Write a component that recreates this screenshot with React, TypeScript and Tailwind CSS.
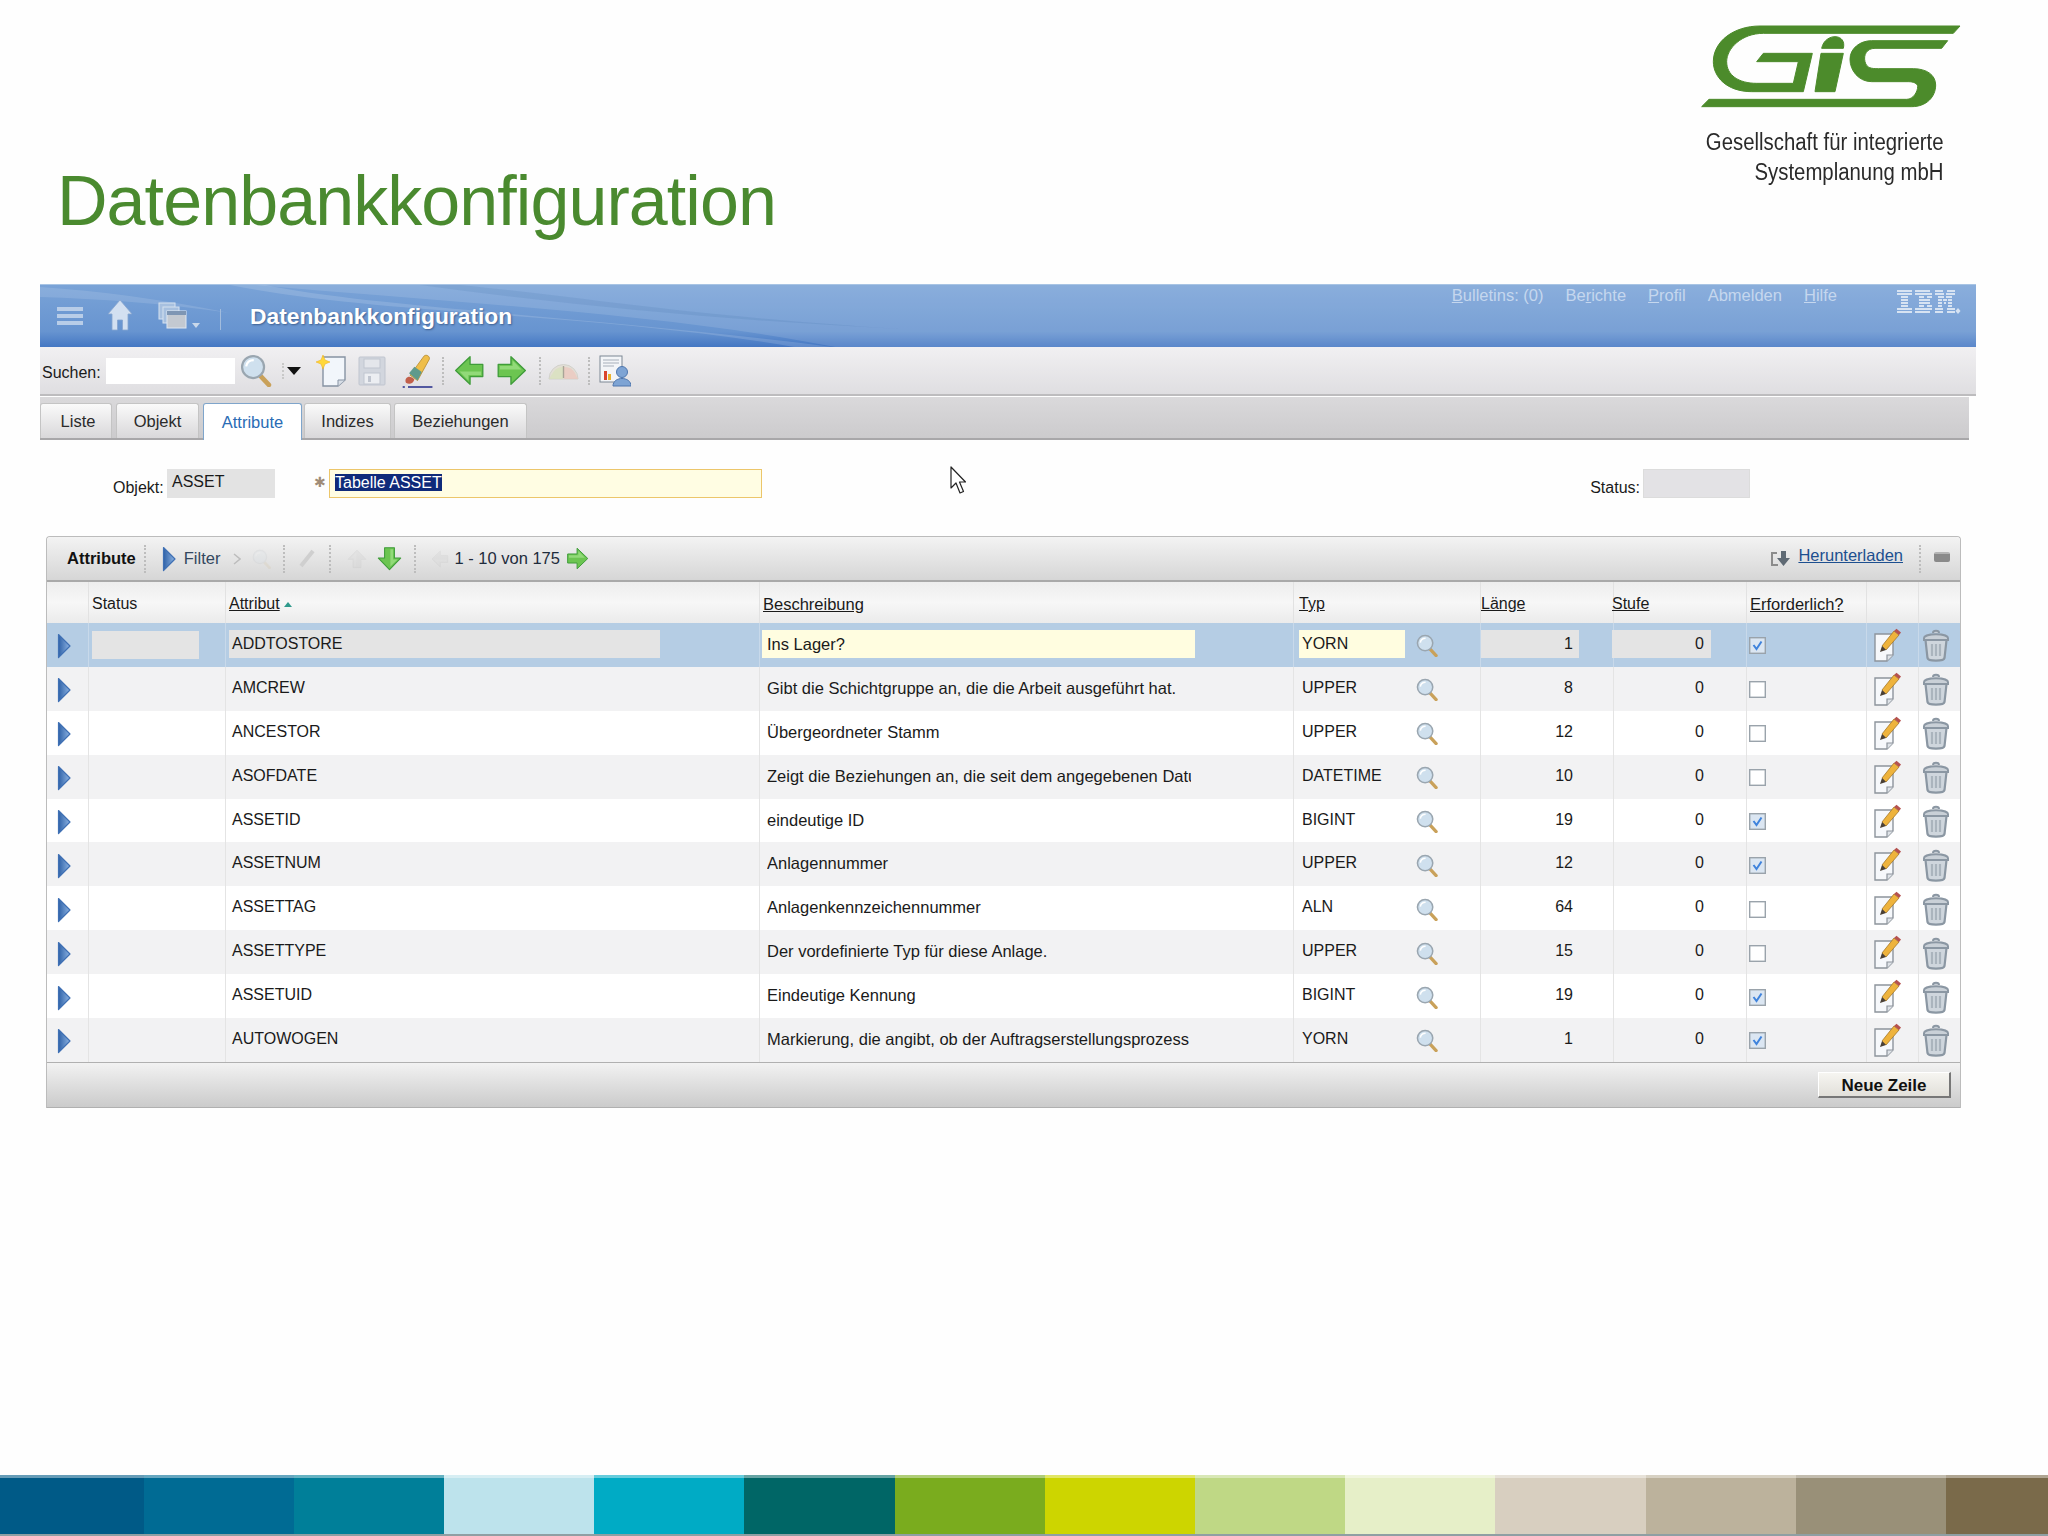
import React from "react";

const cols = "grid grid-cols-[42px_137px_534px_534px_187px_133px_133px_120px_52px_43px]";

const rows = [
  { attr: "ADDTOSTORE", desc: "Ins Lager?", typ: "YORN", len: "1", req: true },
  { attr: "AMCREW", desc: "Gibt die Schichtgruppe an, die die Arbeit ausgeführt hat.", typ: "UPPER", len: "8", req: false },
  { attr: "ANCESTOR", desc: "Übergeordneter Stamm", typ: "UPPER", len: "12", req: false },
  { attr: "ASOFDATE", desc: "Zeigt die Beziehungen an, die seit dem angegebenen Datum", typ: "DATETIME", len: "10", req: false },
  { attr: "ASSETID", desc: "eindeutige ID", typ: "BIGINT", len: "19", req: true },
  { attr: "ASSETNUM", desc: "Anlagennummer", typ: "UPPER", len: "12", req: true },
  { attr: "ASSETTAG", desc: "Anlagenkennzeichennummer", typ: "ALN", len: "64", req: false },
  { attr: "ASSETTYPE", desc: "Der vordefinierte Typ für diese Anlage.", typ: "UPPER", len: "15", req: false },
  { attr: "ASSETUID", desc: "Eindeutige Kennung", typ: "BIGINT", len: "19", req: true },
  { attr: "AUTOWOGEN", desc: "Markierung, die angibt, ob der Auftragserstellungsprozess", typ: "YORN", len: "1", req: true },
];

const tabs = [
  { label: "Liste", cls: "w-[72px] pl-1" },
  { label: "Objekt", cls: "w-[83px] ml-1" },
  { label: "Attribute", cls: "w-[99px] ml-1", active: true },
  { label: "Indizes", cls: "w-[87px] ml-0.5" },
  { label: "Beziehungen", cls: "w-[133px] ml-[3px]" },
];

const strip = [
  "w-[144px] bg-[#005a87]",
  "w-[150px] bg-[#006b94]",
  "w-[150px] bg-[#007f99]",
  "w-[150px] bg-[#bde3ec]",
  "w-[150px] bg-[#00abc5]",
  "w-[151px] bg-[#006666]",
  "w-[150px] bg-[#7aac1e]",
  "w-[150px] bg-[#cdd500]",
  "w-[150px] bg-[#bfd885]",
  "w-[150px] bg-[#e6efc8]",
  "w-[151px] bg-[#d8cfc0]",
  "w-[150px] bg-[#bcb29c]",
  "w-[150px] bg-[#999078]",
  "w-[102px] bg-[#7a6a4a]",
];

// IBM-Logo: Streifen je Zeile als [x, Breite]
const ibmStripes: number[][][] = [
  [[0, 15], [18, 15], [38, 8], [50, 8]],
  [[0, 15], [18, 17], [38, 9], [49, 9]],
  [[4, 7], [22, 5], [30, 5], [41, 6], [49, 6]],
  [[4, 7], [22, 11], [41, 4], [46, 4], [51, 4]],
  [[4, 7], [22, 11], [41, 4], [47, 2], [51, 4]],
  [[4, 7], [22, 5], [30, 5], [41, 4], [51, 4]],
  [[0, 15], [18, 17], [38, 8], [50, 8]],
  [[0, 15], [18, 15], [38, 8], [50, 8]],
];

function GisLogo() {
  return (
    <svg width="280" height="95" viewBox="0 0 840 285" fill="#4c8b2b" stroke="#4c8b2b" strokeWidth="3">
      <path d="M795,18 L775,40 L205,40 C140,40 95,85 95,125 C95,165 130,190 185,190 L295,190 L310,125 L185,125 L205,100 L352,100 L325,215 L170,215 C95,215 55,170 55,125 C55,65 115,18 195,18 Z" />
      <path d="M380,85 C385,60 405,50 420,50 C440,50 450,65 445,85 Z" />
      <path d="M378,100 L445,100 L420,215 L360,215 Z" />
      <path d="M758,62 L740,85 L540,85 C515,85 505,105 510,125 C515,145 530,146 550,146 L655,146 C695,146 722,165 722,195 C722,230 695,260 650,260 L20,260 L42,238 L635,238 C655,238 668,215 668,200 C668,190 655,185 640,185 L530,185 C490,185 465,150 465,118 C465,85 495,62 530,62 Z" />
    </svg>
  );
}

function IbmLogo() {
  return (
    <svg className="ml-[60px] mr-[15px] mt-1" width="64" height="26" viewBox="0 0 64 26" fill="#d7e3f2">
      {ibmStripes.map((line, r) =>
        line.map(([x, w]) => <rect key={`${r}-${x}`} x={x} y={r * 3 + 1} width={w} height="2" />),
      )}
      <path d="M61 19 L63.5 22 L61 25 L58.5 22 Z" />
    </svg>
  );
}

function Lens({ size = 24, className = "" }: { size?: number; className?: string }) {
  return (
    <svg width={size} height={size} viewBox="0 0 24 24" className={className}>
      <path d="M14.5 15.5 L21 22.5" stroke="#c9a15a" strokeWidth="3.4" strokeLinecap="round" />
      <circle cx="9.5" cy="9.5" r="8" fill="#cfe0ee" stroke="#9aa6b0" strokeWidth="1.6" />
      <path d="M4.5 9 C5 6 7 4.5 10 4.5" stroke="#ffffff" strokeWidth="1.6" fill="none" />
    </svg>
  );
}

function GreenArrow({ dir, size = 28, className = "" }: { dir: "left" | "right" | "down"; size?: number; className?: string }) {
  const rot = dir === "left" ? 180 : dir === "down" ? 90 : 0;
  return (
    <svg width={size} height={size} viewBox="0 0 28 28" className={className}>
      <g transform={`rotate(${rot} 14 14)`}>
        <path d="M2 8.5 H13.5 V1.5 L26.5 14 L13.5 26.5 V19.5 H2 Z" fill="#6cc551" stroke="#3f9c3a" strokeWidth="1.2" strokeLinejoin="round" />
        <path d="M3.5 10 H15 V5 L23 13 H3.5 Z" fill="#a3e28a" opacity="0.7" />
      </g>
    </svg>
  );
}

function RowArrow({ className = "" }: { className?: string }) {
  return (
    <svg width="14" height="26" viewBox="0 0 14 26" className={className}>
      <defs>
        <linearGradient id="rowArrow" x1="0" y1="0" x2="1" y2="0">
          <stop offset="0" stopColor="#2f62a8" />
          <stop offset="1" stopColor="#8db3e2" />
        </linearGradient>
      </defs>
      <path d="M1.5 1.5 L13 13 L1.5 24.5 Z" fill="url(#rowArrow)" stroke="#3f70b4" strokeWidth="1.2" strokeLinejoin="round" />
    </svg>
  );
}

function EditIcon() {
  return (
    <svg width="28" height="34" viewBox="0 0 28 34">
      <path d="M1 6 H19 V27 L13 33 H1 Z" fill="#f6f8fb" stroke="#8d949c" strokeWidth="1.4" />
      <path d="M13 33 V27 H19" fill="#dfe3e8" stroke="#8d949c" strokeWidth="1.2" />
      <path d="M8 18 L20 3 L25 7 L12 22 Z" fill="#eeb33c" stroke="#a5772a" strokeWidth="0.8" />
      <path d="M20 3 L22.5 0.8 L27 4.5 L25 7 Z" fill="#b5524f" />
      <path d="M8 18 L12 22 L6 24 Z" fill="#4a4036" />
    </svg>
  );
}

function TrashIcon() {
  return (
    <svg width="28" height="33" viewBox="0 0 28 33">
      <path d="M11 4 C11 1 17 1 17 4" fill="#c9d0d7" stroke="#8b97a3" strokeWidth="2" />
      <path d="M2 9 C2 4 26 4 26 9 V11 H2 Z" fill="#c9d0d7" stroke="#8b97a3" strokeWidth="2" />
      <path d="M3.5 11 H24.5 L22.5 29 C22 32.5 6 32.5 5.5 29 Z" fill="#cfd6dd" stroke="#8b97a3" strokeWidth="2.2" />
      <path d="M10 15 V27 M14 15 V27 M18 15 V27" stroke="#aab4bd" strokeWidth="2.2" />
    </svg>
  );
}

function Checkbox({ checked }: { checked: boolean }) {
  return (
    <svg width="17" height="17" viewBox="0 0 17 17">
      <rect x="0.7" y="0.7" width="15.6" height="15.6" fill={checked ? "#dbe6f2" : "#ffffff"} stroke="#9aa3ab" strokeWidth="1.4" />
      {checked && <path d="M4.5 8 L7.5 12 L12.5 4.5" fill="none" stroke="#3f83dc" strokeWidth="2" />}
    </svg>
  );
}

function Sep({ className = "" }: { className?: string }) {
  return <div className={`h-7 border-l-2 border-dotted border-[#bdbdbd] ${className}`} />;
}

function TopBar() {
  return (
    <div className="relative h-[63px] bg-linear-to-b from-[#7aa3d7] via-[#6794d0] via-75% to-[#4477c3] border-t border-[#a8c4e4] overflow-hidden">
      {/* Schlieren im Hintergrund */}
      <svg className="absolute inset-0" width="1936" height="63" viewBox="0 0 1936 63">
        <path d="M0 2 C60 6 120 14 190 28 C120 18 60 14 0 12 Z" fill="#ffffff" opacity="0.12" />
        <path d="M215 0 L1936 0 L1936 63 L800 63 C640 30 420 18 215 0 Z" fill="#ffffff" opacity="0.12" />
        <path d="M190 0 L225 0 C330 22 560 32 800 63 L760 63 C560 28 340 30 190 0 Z" fill="#ffffff" opacity="0.14" />
        <path d="M420 0 C560 14 640 30 860 44 C700 36 540 22 380 0 Z" fill="#2f5f9f" opacity="0.12" />
      </svg>
      <div className="relative flex items-start h-full">
        <div className="flex flex-col gap-[3px] ml-[17px] mt-[22px] w-[26px]">
          <div className="h-1 bg-[#b8cde8]" />
          <div className="h-1 bg-[#b8cde8]" />
          <div className="h-1 bg-[#b8cde8]" />
        </div>
        <svg className="ml-6 mt-[14px]" width="26" height="32" viewBox="0 0 26 32">
          <path d="M13 1 L25 15 H21 V31 H15.5 V21 H10.5 V31 H5 V15 H1 Z" fill="#d3e0f1" stroke="#86a5cf" strokeWidth="0.8" />
        </svg>
        <svg className="ml-[25px] mt-[17px]" width="29" height="27" viewBox="0 0 29 27">
          <rect x="1" y="1" width="16" height="16" fill="#a7c0df" stroke="#d5e1f0" />
          <rect x="5" y="5" width="16" height="16" fill="#a7c0df" stroke="#d5e1f0" />
          <rect x="9" y="9" width="19" height="17" fill="#c3c9d1" stroke="#dfe7f1" />
          <rect x="9" y="9" width="19" height="4" fill="#7e96b4" />
        </svg>
        <svg className="ml-[5px] mt-[38px]" width="8" height="5" viewBox="0 0 8 5">
          <path d="M0 0 H8 L4 5 Z" fill="#c9d8ea" />
        </svg>
        <div className="ml-5 mt-6 h-[21px] border-l border-[#a2bcdd]" />
        <div className="ml-[29px] mt-[17px] text-[22.8px] leading-7 font-bold text-white [text-shadow:1px_1px_2px_#3d5f90]">
          Datenbankkonfiguration
        </div>
        <div className="ml-auto flex text-[16.5px] leading-5 text-[#c5d7ee]">
          <span><u>B</u>ulletins: (0)</span>
          <span className="ml-[22px]">Be<u>r</u>ichte</span>
          <span className="ml-[22px]"><u>P</u>rofil</span>
          <span className="ml-[22px]">Abmelden</span>
          <span className="ml-[22px]"><u>H</u>ilfe</span>
        </div>
        <IbmLogo />
      </div>
    </div>
  );
}

function SearchBar() {
  return (
    <div className="h-[49px] flex items-center bg-linear-to-b from-[#f1f0f2] to-[#dfdee1] border-b-2 border-[#bdbcbe] text-[16px] text-[#1a1a1a]">
      <span className="ml-0.5 mt-1">Suchen:</span>
      <div className="ml-[5px] h-[26px] w-[129px] bg-white" />
      <Lens size={33} className="ml-[5px]" />
      <Sep className="ml-[9px] !h-4 !border-[#c8c8c8]" />
      <svg className="ml-[3px]" width="14" height="8" viewBox="0 0 14 8">
        <path d="M0 0 H14 L7 8 Z" fill="#111" />
      </svg>
      <svg className="ml-[15px]" width="31" height="33" viewBox="0 0 31 33">
        <path d="M7 3 H29 V26 L22 32 H7 Z" fill="#f2f6fb" stroke="#8793a3" strokeWidth="1.4" />
        <path d="M22 32 V26 H29" fill="#d8dee6" stroke="#8793a3" />
        <path d="M7 1 L9 6 L14 8 L9 10 L7 15 L5 10 L0 8 L5 6 Z" fill="#ffd83a" stroke="#f0b323" strokeWidth="0.6" />
      </svg>
      <svg className="ml-[11px]" width="28" height="30" viewBox="0 0 28 30">
        <rect x="1" y="1" width="26" height="28" rx="1" fill="#d2d6de" stroke="#c0c5cf" />
        <rect x="6" y="3" width="16" height="9" fill="#e4e6eb" stroke="#c0c5cf" />
        <rect x="6" y="17" width="16" height="11" fill="#eceef2" stroke="#c0c5cf" />
        <rect x="10" y="20" width="3" height="6" fill="#c0c5cf" />
      </svg>
      <svg className="ml-[14px]" width="33" height="34" viewBox="0 0 30 32">
        <path d="M9 20 L22 2 C24 0 28 2 27 5 L16 25 Z" fill="#efbe4a" stroke="#b88c30" strokeWidth="0.8" />
        <path d="M8 18 L13 12 L20 17 L16 25 Z" fill="#5f9a8c" />
        <path d="M5 27 C3 22 9 19 13 24 C12 28 8 29 5 27 Z" fill="#c25f4a" />
        <path d="M2 31 H4 M7 31 H30" stroke="#5258a0" strokeWidth="2" />
      </svg>
      <Sep className="ml-[9px]" />
      <GreenArrow dir="left" size={31} className="ml-[10px]" />
      <GreenArrow dir="right" size={31} className="ml-[11px]" />
      <Sep className="ml-3" />
      <svg className="ml-[7px]" width="31" height="18" viewBox="0 0 31 18">
        <path d="M1 17 A14.5 14.5 0 0 1 30 17 Z" fill="#e3dfd6" stroke="#d2d2cc" />
        <path d="M6 9 A12 12 0 0 1 15 5 V17 H1 Z" fill="#d7e1bb" opacity="0.7" />
        <path d="M16 5 A12 12 0 0 1 27 11 L30 17 H16 Z" fill="#ecc5bc" opacity="0.7" />
        <path d="M15.5 4 V16" stroke="#a9a498" strokeWidth="1.4" />
      </svg>
      <Sep className="ml-[9px]" />
      <svg className="ml-[9px]" width="32" height="32" viewBox="0 0 32 32">
        <rect x="1" y="1" width="22" height="26" fill="#f3f5f8" stroke="#7d8794" />
        <path d="M4 5 H20 M4 8 H20 M4 11 H15" stroke="#a8b0ba" strokeWidth="1.2" />
        <rect x="5" y="16" width="3" height="9" fill="#d9442e" />
        <rect x="9" y="19" width="3" height="6" fill="#e9b32e" />
        <circle cx="23" cy="17" r="5.5" fill="#7ea4d4" stroke="#4f77ae" />
        <path d="M14 31 C14 21 32 21 32 31 Z" fill="#7ea4d4" stroke="#4f77ae" />
      </svg>
    </div>
  );
}

function TabBar() {
  return (
    <div className="mt-px w-[1929px] h-[43px] pt-[7px] flex items-end bg-linear-to-b from-[#dad9db] to-[#cccbcd] border-b-2 border-[#a8a7a9] text-[16.5px] text-[#2b2b2b]">
      {tabs.map((t) =>
        t.active ? (
          <div
            key={t.label}
            className={`${t.cls} h-[37px] -mb-0.5 flex items-center justify-center rounded-t-[3px] bg-white border border-b-0 border-[#7fa5cb] text-[#2a6cb5]`}
          >
            {t.label}
          </div>
        ) : (
          <div
            key={t.label}
            className={`${t.cls} h-[35px] flex items-center justify-center rounded-t-[3px] bg-linear-to-b from-[#fafafa] to-[#d9d8da] border border-b-0 border-[#c4c4c4]`}
          >
            {t.label}
          </div>
        ),
      )}
    </div>
  );
}

function FormRow() {
  return (
    <div className="relative h-[96px] pt-[29px] flex items-start text-[16px] text-[#1a1a1a]">
      <span className="ml-[73px] w-[54px] mt-[9px] leading-5">Objekt:</span>
      <div className="h-[29px] w-[108px] pl-[5px] pt-[3px] leading-5 bg-[#e3e3e3]">ASSET</div>
      <span className="ml-10 mt-[8px] w-2.5 h-2.5 flex items-center justify-center text-[#a08c78] text-[14px] leading-none">✱</span>
      <div className="ml-1 h-[29px] w-[433px] pl-[5px] pt-[3px] leading-5 bg-[#fffde3] border border-[#ecc66a]">
        <span className="bg-[#0f2a7a] text-white">Tabelle ASSET</span>
      </div>
      <svg className="absolute left-[910px] top-[26px]" width="16" height="28" viewBox="0 0 16 28">
        <path d="M1 1 V22 L6 17 L10 27 L13.5 25.5 L9.5 16 H15.5 Z" fill="#fff" stroke="#222" strokeWidth="1.2" strokeLinejoin="round" />
      </svg>
      <span className="ml-auto mt-[9px] leading-5">Status:</span>
      <div className="ml-[3px] mr-[226px] h-[29px] w-[107px] bg-[#e3e2e5] border border-[#dcdcdc]" />
    </div>
  );
}

function TableToolbar() {
  return (
    <div className="h-[45px] flex items-center rounded-t-[4px] bg-linear-to-b from-[#f3f3f3] to-[#d6d6d6] border-b-2 border-[#a9a9a9] text-[16.5px] text-[#33475f]">
      <span className="ml-5 font-bold text-[#111]">Attribute</span>
      <Sep className="ml-2" />
      <RowArrow className="ml-4" />
      <span className="ml-2">Filter</span>
      <svg className="ml-[13px]" width="8" height="12" viewBox="0 0 8 12">
        <path d="M1 1 L7 6 L1 11" fill="none" stroke="#bdbdbd" strokeWidth="1.5" />
      </svg>
      <Lens size={20} className="ml-[11px] opacity-10" />
      <Sep className="ml-[11px]" />
      <svg className="ml-3" width="20" height="22" viewBox="0 0 20 22">
        <path d="M4 18 L16 3" stroke="#cfcfcf" strokeWidth="4" />
      </svg>
      <Sep className="ml-3" />
      <GreenArrow dir="right" size={20} className="ml-4 -rotate-90 opacity-10 grayscale" />
      <GreenArrow dir="down" size={25} className="ml-[10px]" />
      <Sep className="ml-3" />
      <GreenArrow dir="left" size={18} className="ml-[15px] opacity-10 grayscale" />
      <span className="ml-[5px] text-[#1f2c3c]">1 - 10 von 175</span>
      <GreenArrow dir="right" size={23} className="ml-1.5" />
      <svg className="ml-auto" width="20" height="18" viewBox="0 0 20 18">
        <path d="M6 3 H1 V15 H7" fill="none" stroke="#8c8c8c" strokeWidth="2" />
        <path d="M10 1 H15 V8 H19 L12.5 16 L6 8 H10 Z" fill="#5f6a74" />
      </svg>
      <span className="ml-[7px] text-[#1d4f8f] underline mb-[6px]">Herunterladen</span>
      <Sep className="ml-4" />
      <div className="ml-[13px] mr-[10px] mb-1 h-2.5 w-4 rounded-[2px] bg-[#8a8a8a] border-t-2 border-[#b5b5b5]" />
    </div>
  );
}

function TableHeader() {
  const cell = "border-r border-[#e2e2e2] pl-[3px] pt-[12px] leading-5";
  return (
    <div className={`${cols} h-[41px] bg-linear-to-b from-[#ededed] via-[#f7f7f7] to-[#ebebeb] text-[16px] text-[#1a1a1a]`}>
      <div className={cell} />
      <div className={cell}>Status</div>
      <div className={cell}>
        <u>Attribut</u>
        <span className="ml-1 inline-block align-middle w-0 h-0 border-x-[4px] border-b-[5px] border-x-transparent border-b-[#2f9a8c]" />
      </div>
      <div className={cell}><u className="text-[16.5px]">Beschreibung</u></div>
      <div className={`${cell} !pl-[5px]`}><u>Typ</u></div>
      <div className={`${cell} !pl-0`}><u>Länge</u></div>
      <div className={`${cell} !pl-0`}><u className="-ml-0.5">Stufe</u></div>
      <div className={cell}><u className="text-[16.5px]">Erforderlich?</u></div>
      <div className={cell} />
      <div />
    </div>
  );
}

function TableRow({ row, idx }: { row: (typeof rows)[number]; idx: number }) {
  const selected = idx === 0;
  const bg = selected ? "bg-[#b5cde4]" : idx % 2 === 1 ? "bg-[#f2f2f3]" : "bg-white";
  const cell = `border-r ${selected ? "border-[#c8d9ea]" : "border-[#e4e4e4]"} flex items-center`;
  const field = "h-7 leading-6 flex items-center";
  return (
    <div className={`${cols} h-[43.9px] ${bg} text-[16px] text-[#1a1a1a]`}>
      <div className={`${cell} pl-[10px] pt-[3px]`}>
        <RowArrow />
      </div>
      <div className={`${cell} pl-[3px]`}>
        {selected && <div className="h-7 w-[107px] bg-[#e4e4e4]" />}
      </div>
      <div className={`${cell} pl-[3px]`}>
        <div className={`${field} w-[431px] pl-[3px] -mt-0.5 ${selected ? "bg-[#e4e4e4]" : ""}`}>{row.attr}</div>
      </div>
      <div className={`${cell} pl-0.5`}>
        <div className={`${field} w-[433px] pl-[5px] -mt-0.5 whitespace-nowrap overflow-hidden text-[16.5px] ${selected ? "bg-[#fffde0]" : ""}`}>
          <span className="block w-[424px] overflow-hidden">{row.desc}</span>
        </div>
      </div>
      <div className={`${cell} pl-[5px]`}>
        <div className={`${field} w-[106px] pl-[3px] -mt-0.5 ${selected ? "bg-[#fffde0]" : ""}`}>{row.typ}</div>
        <Lens size={23} className="ml-[11px] mt-0.5" />
      </div>
      <div className={`${cell} justify-start`}>
        <div className={`${field} w-[98px] justify-end pr-1.5 -mt-0.5 ${selected ? "bg-[#e4e4e4]" : ""}`}>{row.len}</div>
      </div>
      <div className={`${cell} justify-start`}>
        <div className={`${field} w-[99px] -ml-0.5 justify-end pr-[7px] -mt-0.5 ${selected ? "bg-[#e4e4e4]" : ""}`}>0</div>
      </div>
      <div className={`${cell} pl-[2px] pt-0.5`}>
        <Checkbox checked={row.req} />
      </div>
      <div className={`${cell} pl-[7px]`}>
        <EditIcon />
      </div>
      <div className="flex items-center pl-[3px] pt-0.5">
        <TrashIcon />
      </div>
    </div>
  );
}

export default function App() {
  return (
    <div className="w-[2048px] h-[1536px] flex flex-col overflow-hidden bg-[#fefefe] font-['Liberation_Sans',Arial,sans-serif]">
      {/* Folienkopf */}
      <div className="h-[284px] flex items-start justify-between">
        <h1 className="ml-[57px] mt-[157px] text-[70px] leading-[88px] tracking-[-0.93px] text-[#4a8a2f]">Datenbankkonfiguration</h1>
        <div className="mr-[73px] mt-5 flex flex-col items-end">
          <GisLogo />
          <div className="mr-8 mt-[12px] whitespace-nowrap text-right text-[23px] leading-[30px] text-[#2a2a2a] origin-right scale-x-[.885]">
            Gesellschaft für integrierte
            <br />
            Systemplanung mbH
          </div>
        </div>
      </div>

      {/* Maximo-Fenster */}
      <div className="ml-10 w-[1936px]">
        <TopBar />
        <SearchBar />
        <TabBar />
        <FormRow />
        <div className="ml-1.5 w-[1915px] border-t border-x border-[#bcbcbc] rounded-t-[4px]">
          <TableToolbar />
          <TableHeader />
          {rows.map((row, i) => (
            <TableRow key={row.attr} row={row} idx={i} />
          ))}
          <div className="h-[46px] flex items-center justify-end pr-[9px] bg-linear-to-b from-[#f2f2f2] to-[#cbcbcb] border-y border-[#b0b0b0]">
            <button className="h-[26px] w-[133px] text-[17px] font-bold text-[#111] bg-linear-to-b from-[#f6f5f1] to-[#e2e0da] border-b-2 border-r-2 border-[#777] border-t border-l border-t-white border-l-white">
              Neue Zeile
            </button>
          </div>
        </div>
      </div>

      <div className="flex-1" />

      {/* Farbleiste */}
      <div className="flex h-[59px]">
        {strip.map((s) => (
          <div key={s} className={`${s} border-t-[3px] border-white/40`} />
        ))}
      </div>
      <div className="h-0.5 bg-[#8f9fa3]" />
    </div>
  );
}
